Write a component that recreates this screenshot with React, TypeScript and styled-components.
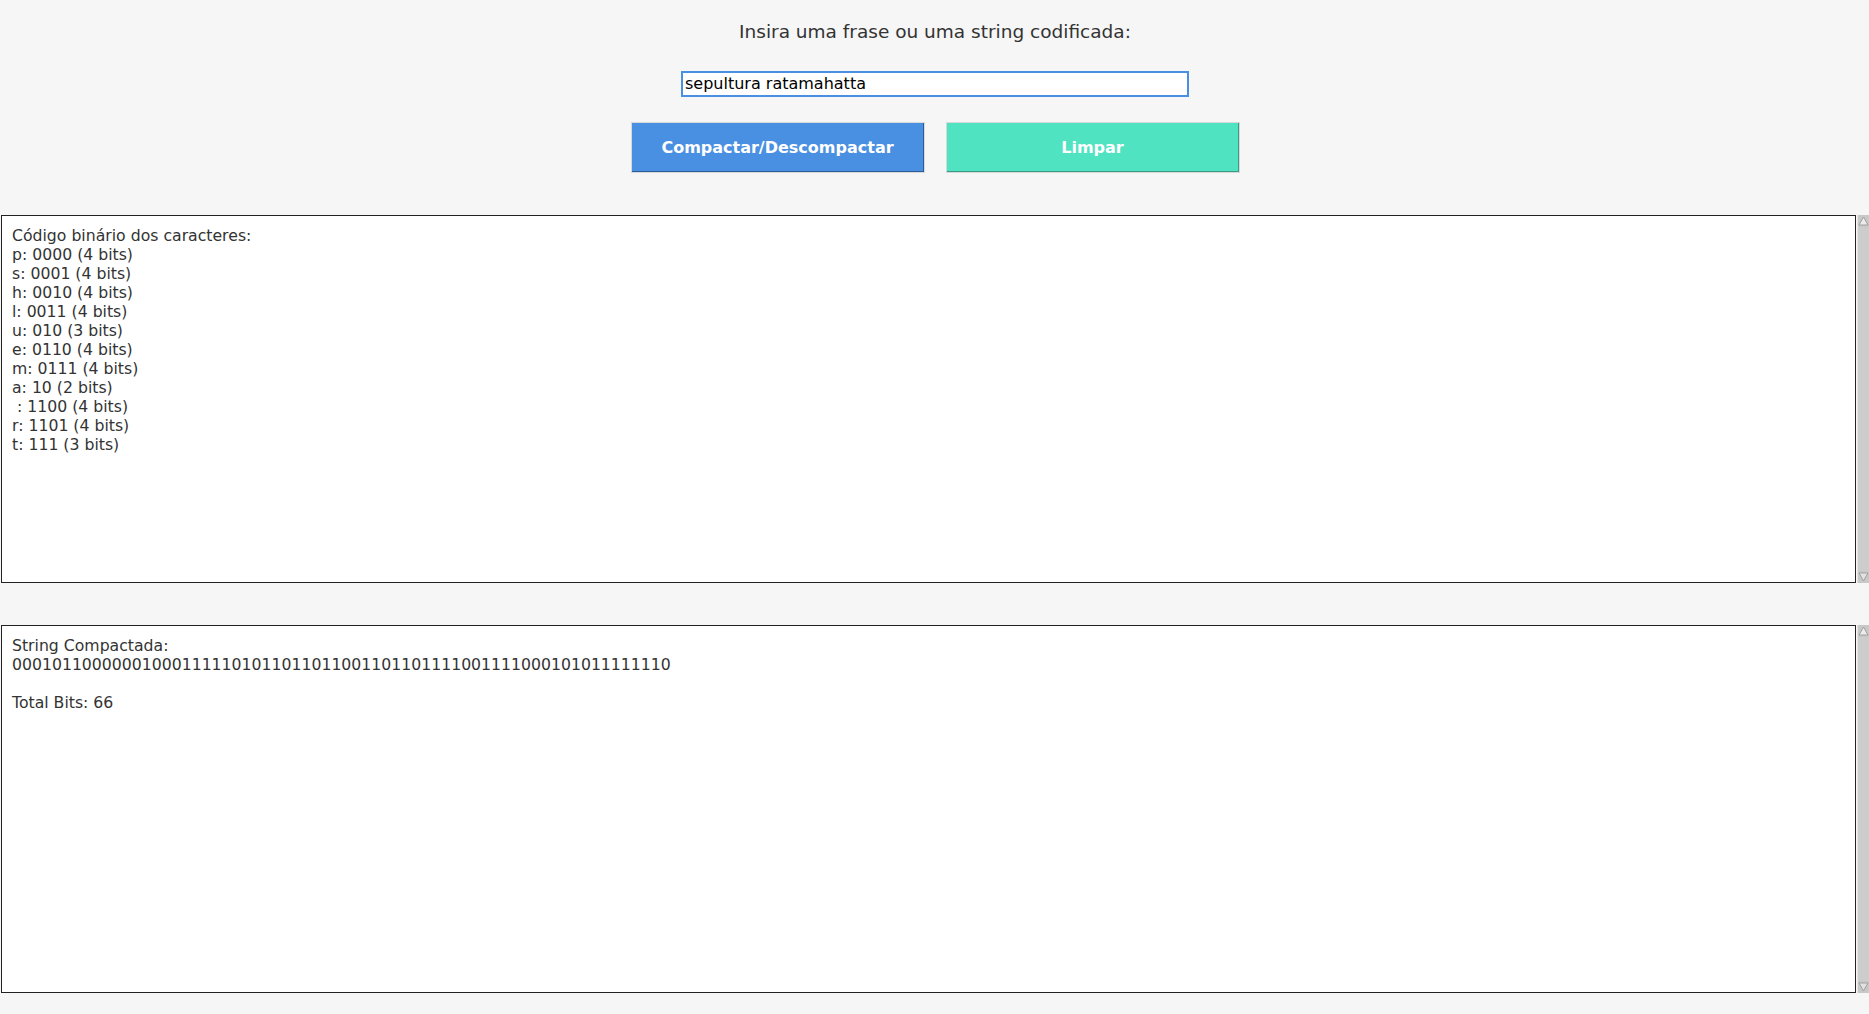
import React from "react";
import styled, { createGlobalStyle } from "styled-components";

const GlobalStyle = createGlobalStyle`
  html, body {
    margin: 0;
    padding: 0;
    background: #f6f6f6;
    font-family: "DejaVu Sans", "Liberation Sans", sans-serif;
  }
`;

const Page = styled.div`
  min-height: 1014px;
  box-sizing: border-box;
  background: #f6f6f6;
  padding: 21px 0 0 1px;
  display: flex;
  flex-direction: column;
  align-items: stretch;
`;

const Title = styled.h2`
  margin: 0;
  font-size: 18.5px;
  font-weight: normal;
  line-height: 21.5px;
  color: #333;
  text-align: center;
`;

const InputRow = styled.div`
  display: flex;
  justify-content: center;
  margin-top: 28px;
`;

const TextInput = styled.input`
  box-sizing: border-box;
  width: 508px;
  height: 26px;
  border: 2px solid #4a90e2;
  outline: none;
  padding: 0 2px;
  background: #fff;
  color: #000;
  font-family: "DejaVu Sans", sans-serif;
  font-size: 16px;
`;

const ButtonRow = styled.div`
  display: flex;
  justify-content: center;
  gap: 21px;
  margin-top: 25px;
`;

const Button = styled.button<{ $bg: string; $edge: string }>`
  box-sizing: border-box;
  width: 294px;
  height: 51px;
  border: 1px solid #d8d8d8;
  background: ${(p) => p.$bg};
  box-shadow: inset -1px -1px 0 ${(p) => p.$edge};
  color: #fff;
  font-family: "DejaVu Sans", sans-serif;
  font-weight: bold;
  font-size: 16px;
  cursor: pointer;
  padding: 0;
`;

const PanelRow = styled.div<{ $top: number }>`
  display: flex;
  align-items: stretch;
  height: 368px;
  margin-top: ${(p) => p.$top}px;
`;

const Panel = styled.div`
  flex: 1;
  box-sizing: border-box;
  border: 1px solid #222;
  background: #fff;
  padding: 10px 10px;
  color: #333;
  font-family: "DejaVu Sans", sans-serif;
  font-size: 15.7px;
  line-height: 19px;
  white-space: pre;
  overflow: hidden;
`;

const Scrollbar = styled.div`
  width: 11px;
  margin-left: 1px;
  background: #cdcdcd;
  border-left: 1px solid #e4e4e4;
  display: flex;
  flex-direction: column;
  justify-content: space-between;
`;

const Arrow = styled.div`
  height: 12px;
  display: flex;
  align-items: center;
  justify-content: center;
  background: #c8c8c8;
`;

const ScrollArrow = ({ down }: { down?: boolean }) => (
  <Arrow>
    <svg width="11" height="12" viewBox="0 0 11 12">
      {down ? (
        <polygon points="1,2 10,2 5.5,10" fill="#e2e2e2" stroke="#a0a0a0" strokeWidth="1" />
      ) : (
        <polygon points="1,10 10,10 5.5,2" fill="#ececec" stroke="#a0a0a0" strokeWidth="1" />
      )}
    </svg>
  </Arrow>
);

const codes = [
  "Código binário dos caracteres:",
  "p: 0000 (4 bits)",
  "s: 0001 (4 bits)",
  "h: 0010 (4 bits)",
  "l: 0011 (4 bits)",
  "u: 010 (3 bits)",
  "e: 0110 (4 bits)",
  "m: 0111 (4 bits)",
  "a: 10 (2 bits)",
  " : 1100 (4 bits)",
  "r: 1101 (4 bits)",
  "t: 111 (3 bits)",
].join("\n");

const compressed = [
  "String Compactada:",
  "000101100000010001111101011011011001101101111001111000101011111110",
  "",
  "Total Bits: 66",
].join("\n");

export default function App() {
  return (
    <>
      <GlobalStyle />
      <Page>
        <Title>Insira uma frase ou uma string codificada:</Title>
        <InputRow>
          <TextInput defaultValue="sepultura ratamahatta" />
        </InputRow>
        <ButtonRow>
          <Button $bg="#4a90e2" $edge="#2d5e9a">Compactar/Descompactar</Button>
          <Button $bg="#50e3c2" $edge="#3a9a84">Limpar</Button>
        </ButtonRow>
        <PanelRow $top={42}>
          <Panel>{codes}</Panel>
          <Scrollbar>
            <ScrollArrow />
            <ScrollArrow down />
          </Scrollbar>
        </PanelRow>
        <PanelRow $top={42}>
          <Panel>{compressed}</Panel>
          <Scrollbar>
            <ScrollArrow />
            <ScrollArrow down />
          </Scrollbar>
        </PanelRow>
      </Page>
    </>
  );
}
